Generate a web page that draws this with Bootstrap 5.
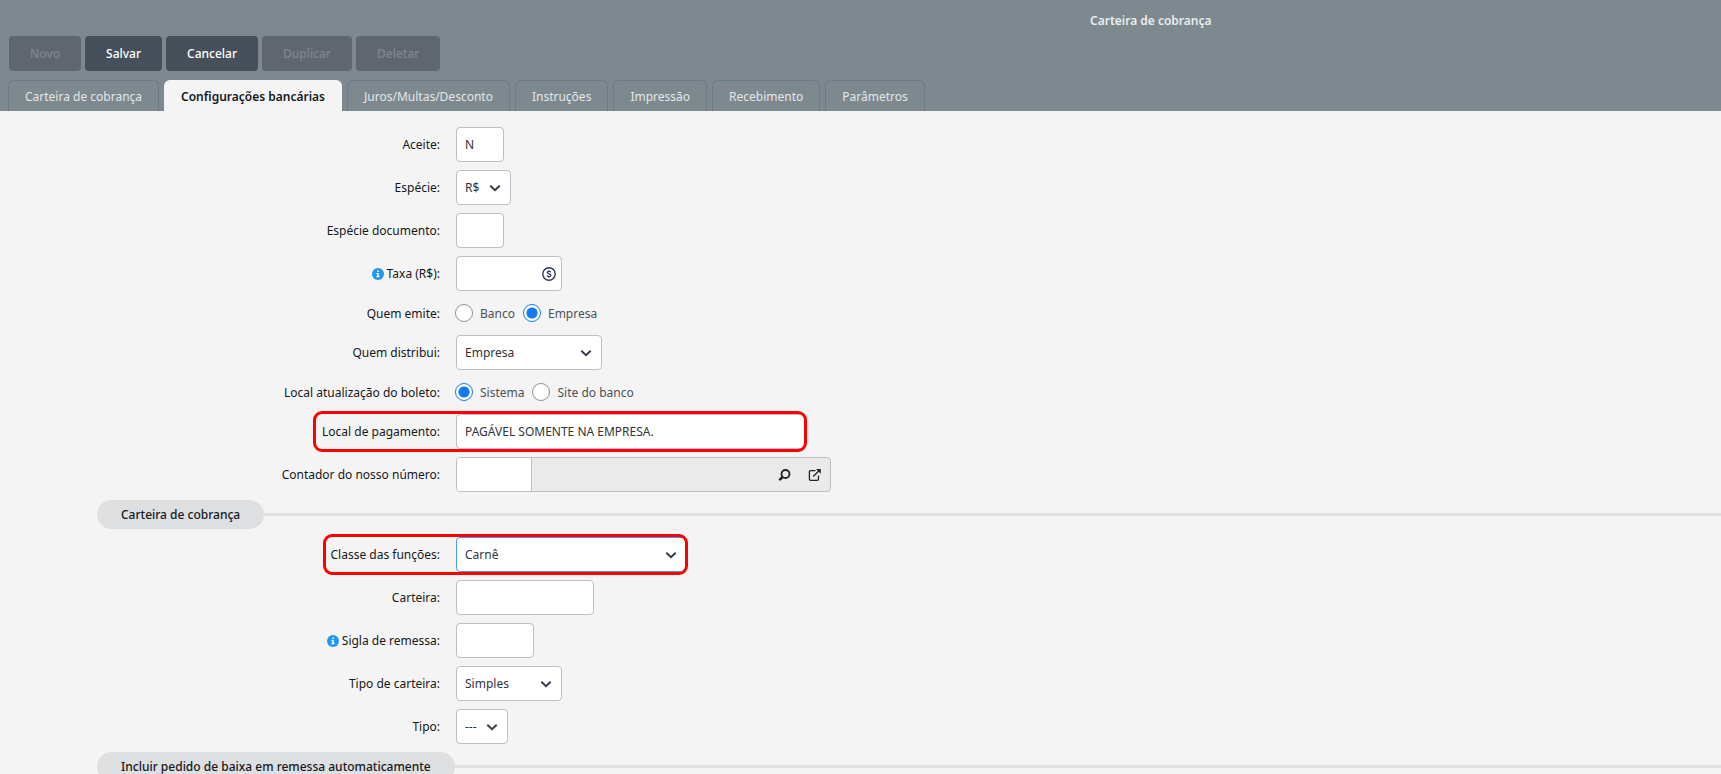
<!DOCTYPE html>
<html lang="pt-BR">
<head>
<meta charset="utf-8">
<meta name="viewport" content="width=device-width, initial-scale=1">
<title>Carteira de cobrança</title>
<link href="https://cdn.jsdelivr.net/npm/bootstrap@5.3.0/dist/css/bootstrap.min.css" rel="stylesheet">
<style>
  body { font: 12px/19px "Noto Sans", "Open Sans", sans-serif; color: #15181c; background: #f4f4f4; overflow: hidden; }
  .app-header { background: #7d898f; padding: 8px 8px 0; }
  .app-title { font-size: 12px; line-height: 26px; font-weight: 600; color: #e9ecee; padding-left: 1082px; white-space: nowrap; }
  .toolbar { gap: 4px; padding: 2px 1px 9px; }
  .tool-btn { height: 35px; padding: 0 20px; border: 1px solid transparent; border-radius: 4px; font-size: 12px; line-height: 19px; font-weight: 500; color: #fff; background: #46505a; }
  .tool-btn:hover { color: #fff; background: #3b444d; }
  .tool-btn:disabled { color: #7f8692; background: #60666f; border-color: transparent; opacity: 1; }
  .app-tabs { border: 0; gap: 5px; }
  .app-tabs .nav-link { height: 31px; margin: 0; padding: 6px 16px; border: 1px solid #6c7a84; border-bottom: 0; border-radius: 6px 6px 0 0; color: #e3e7e9; line-height: 19px; }
  .app-tabs .nav-link.active { color: #16191d; background: #f4f4f4; border-color: #f4f4f4; font-weight: 600; }
  .form-area { display: flex; flex-direction: column; gap: 8px; padding: 16px 0; }
  .field { display: flex; align-items: center; gap: 16px; min-height: 28px; position: relative; }
  .field-label { flex: 0 0 440px; display: flex; justify-content: flex-end; align-items: center; gap: 3px; }
  .field .form-control, .field .form-select { height: 35px; padding: 0 8px; border: 1px solid #bbc0c4; border-radius: 4px; font-size: 12px; line-height: 19px; color: #2f343a; background-color: #fff; width: var(--w); box-shadow: none; }
  .field .form-select { padding-right: 24px; background-image: url("data:image/svg+xml,%3Csvg xmlns='http://www.w3.org/2000/svg' viewBox='0 0 12 12'%3E%3Cpath d='M1.300 3.700 6 8.200l4.700-4.500' fill='none' stroke='%23343d48' stroke-width='2'/%3E%3C/svg%3E"); background-size: 12px 12px; background-position: right 9px center; }
  .field .is-current { border-color: #4a98ea; }
  .w-code { --w: 48px; } .w-tiny { --w: 52px; } .w-coin { --w: 55px; } .w-short { --w: 78px; }
  .w-money { --w: 106px; } .w-mid { --w: 138px; } .w-who { --w: 146px; } .w-class { --w: 231px; } .w-long { --w: 350px; }
  .marked::after { content: ""; position: absolute; top: -3px; bottom: -3px; left: var(--from); width: var(--span); border: 3px solid #f00; border-radius: 9px; pointer-events: none; }
  .mark-pay { --from: 313px; --span: 494px; }
  .mark-class { --from: 323px; --span: 365px; }
  .choice { gap: 8px; margin-left: -1px; color: #4c5158; }
  .choice label { display: flex; align-items: center; gap: 7px; }
  .choice .form-check-input { width: 18px; height: 18px; margin: 0; border: 1px solid #8d939c; background-color: #fff; box-shadow: none; }
  .choice .form-check-input:checked { border-color: #147af3; background-color: #fff; background-image: radial-gradient(circle, #147af3 5px, transparent 6px); }
  .money-icon { position: absolute; right: 6px; top: 11px; }
  .lookup { width: 375px; height: 35px; border: 1px solid #bbc0c4; border-radius: 4px; background: #eaeaea; overflow: hidden; }
  .field .lookup .form-control { --w: 75px; height: 33px; border-width: 0 1px 0 0; border-radius: 0; }
  .icon-btn { display: flex; padding: 0; border: 0; background: none; color: #1f2328; }
  .section-bar { display: flex; align-items: center; padding-left: 97px; }
  .section-bar h2 { margin: 0; padding: 5px 24px; border-radius: 15px; background: #dddfe1; font-size: 12px; line-height: 19px; font-weight: 500; }
  .section-bar::after { content: ""; flex: 1; height: 3px; background: #dddfe1; }
</style>
</head>
<body>
<header class="app-header">
  <h1 class="app-title m-0">Carteira de cobrança</h1>
  <div class="toolbar d-flex">
    <button type="button" class="btn tool-btn" disabled>Novo</button>
    <button type="button" class="btn tool-btn">Salvar</button>
    <button type="button" class="btn tool-btn">Cancelar</button>
    <button type="button" class="btn tool-btn" disabled>Duplicar</button>
    <button type="button" class="btn tool-btn" disabled>Deletar</button>
  </div>
  <ul class="nav nav-tabs app-tabs">
    <li class="nav-item"><a class="nav-link" href="#">Carteira de cobrança</a></li>
    <li class="nav-item"><a class="nav-link active" aria-current="page" href="#">Configurações bancárias</a></li>
    <li class="nav-item"><a class="nav-link" href="#">Juros/Multas/Desconto</a></li>
    <li class="nav-item"><a class="nav-link" href="#">Instruções</a></li>
    <li class="nav-item"><a class="nav-link" href="#">Impressão</a></li>
    <li class="nav-item"><a class="nav-link" href="#">Recebimento</a></li>
    <li class="nav-item"><a class="nav-link" href="#">Parâmetros</a></li>
  </ul>
</header>

<svg class="d-none" aria-hidden="true">
  <symbol id="info" viewBox="0 0 12 12"><circle cx="6" cy="6" r="6" fill="#2196f3"/><path d="M5.2 2.4h1.700v1.500H5.200zM4.400 5h2.400v3.100h.7v1.200H4.400V8.100h.8V6.100h-.8z" fill="#fff"/></symbol>
</svg>

<main>
<form class="form-area">
  <div class="field"><label class="field-label" for="aceite">Aceite:</label><input id="aceite" class="form-control w-code" value="N"></div>
  <div class="field"><label class="field-label" for="especie">Espécie:</label><select id="especie" class="form-select w-coin"><option>R$</option></select></div>
  <div class="field"><label class="field-label" for="especieDoc">Espécie documento:</label><input id="especieDoc" class="form-control w-code"></div>
  <div class="field">
    <label class="field-label" for="taxa"><svg width="12" height="12"><use href="#info"/></svg>Taxa (R$):</label>
    <div class="position-relative">
      <input id="taxa" class="form-control w-money">
      <svg class="money-icon" width="14" height="14" viewBox="0 0 14 14" fill="none" stroke="#2b3a55"><circle cx="7" cy="7" r="6.200" stroke-width="1.400"/><path d="M8.900 5.300C8.500 4.600 7.800 4.400 7 4.400c-1 0-1.800.4-1.800 1.200C5.200 7.300 8.900 6.500 8.900 8.300c0 .9-.9 1.300-1.900 1.300-.9 0-1.600-.3-2-1M7 3.200v1.200M7 9.600v1.200" stroke-width="1.200"/></svg>
    </div>
  </div>
  <div class="field" role="radiogroup" aria-labelledby="emite">
    <span class="field-label" id="emite">Quem emite:</span>
    <div class="choice d-flex">
      <label><input class="form-check-input" type="radio" name="emite">Banco</label>
      <label><input class="form-check-input" type="radio" name="emite" checked>Empresa</label>
    </div>
  </div>
  <div class="field"><label class="field-label" for="distribui">Quem distribui:</label><select id="distribui" class="form-select w-who"><option>Empresa</option></select></div>
  <div class="field" role="radiogroup" aria-labelledby="boleto">
    <span class="field-label" id="boleto">Local atualização do boleto:</span>
    <div class="choice d-flex">
      <label><input class="form-check-input" type="radio" name="boleto" checked>Sistema</label>
      <label><input class="form-check-input" type="radio" name="boleto">Site do banco</label>
    </div>
  </div>
  <div class="field marked mark-pay"><label class="field-label" for="pagamento">Local de pagamento:</label><input id="pagamento" class="form-control w-long" value="PAGÁVEL SOMENTE NA EMPRESA."></div>
  <div class="field">
    <label class="field-label" for="contador">Contador do nosso número:</label>
    <div class="lookup d-flex align-items-center">
      <input id="contador" class="form-control">
      <div class="d-flex align-items-center ms-auto gap-3 pe-2">
        <button type="button" class="icon-btn" aria-label="Pesquisar"><svg width="14" height="14" viewBox="0 0 14 14" fill="none" stroke="currentColor"><circle cx="7.500" cy="6" r="4" stroke-width="1.800"/><path d="M4.700 8.800 1.300 12.200" stroke-width="2.400"/></svg></button>
        <button type="button" class="icon-btn" aria-label="Abrir cadastro"><svg width="14" height="14" viewBox="0 0 14 14" fill="none" stroke="currentColor" stroke-width="1.300"><path d="M7.500 2.700H2.700q-1.300 0-1.300 1.300v7q0 1.300 1.300 1.300h6.500q1.300 0 1.300-1.300V7.500M5.200 8.500l6-6"/><path d="M8 1h4.800v4.800z" fill="currentColor" stroke="none"/></svg></button>
      </div>
    </div>
  </div>

  <div class="section-bar"><h2>Carteira de cobrança</h2></div>

  <div class="field marked mark-class"><label class="field-label" for="classe">Classe das funções:</label><select id="classe" class="form-select w-class is-current"><option>Carnê</option></select></div>
  <div class="field"><label class="field-label" for="carteira">Carteira:</label><input id="carteira" class="form-control w-mid"></div>
  <div class="field"><label class="field-label" for="sigla"><svg width="12" height="12"><use href="#info"/></svg>Sigla de remessa:</label><input id="sigla" class="form-control w-short"></div>
  <div class="field"><label class="field-label" for="tipoCarteira">Tipo de carteira:</label><select id="tipoCarteira" class="form-select w-money"><option>Simples</option></select></div>
  <div class="field"><label class="field-label" for="tipo">Tipo:</label><select id="tipo" class="form-select w-tiny"><option>---</option></select></div>

  <div class="section-bar"><h2>Incluir pedido de baixa em remessa automaticamente</h2></div>
</form>
</main>
<script src="https://cdn.jsdelivr.net/npm/bootstrap@5.3.0/dist/js/bootstrap.bundle.min.js"></script>
</body>
</html>
